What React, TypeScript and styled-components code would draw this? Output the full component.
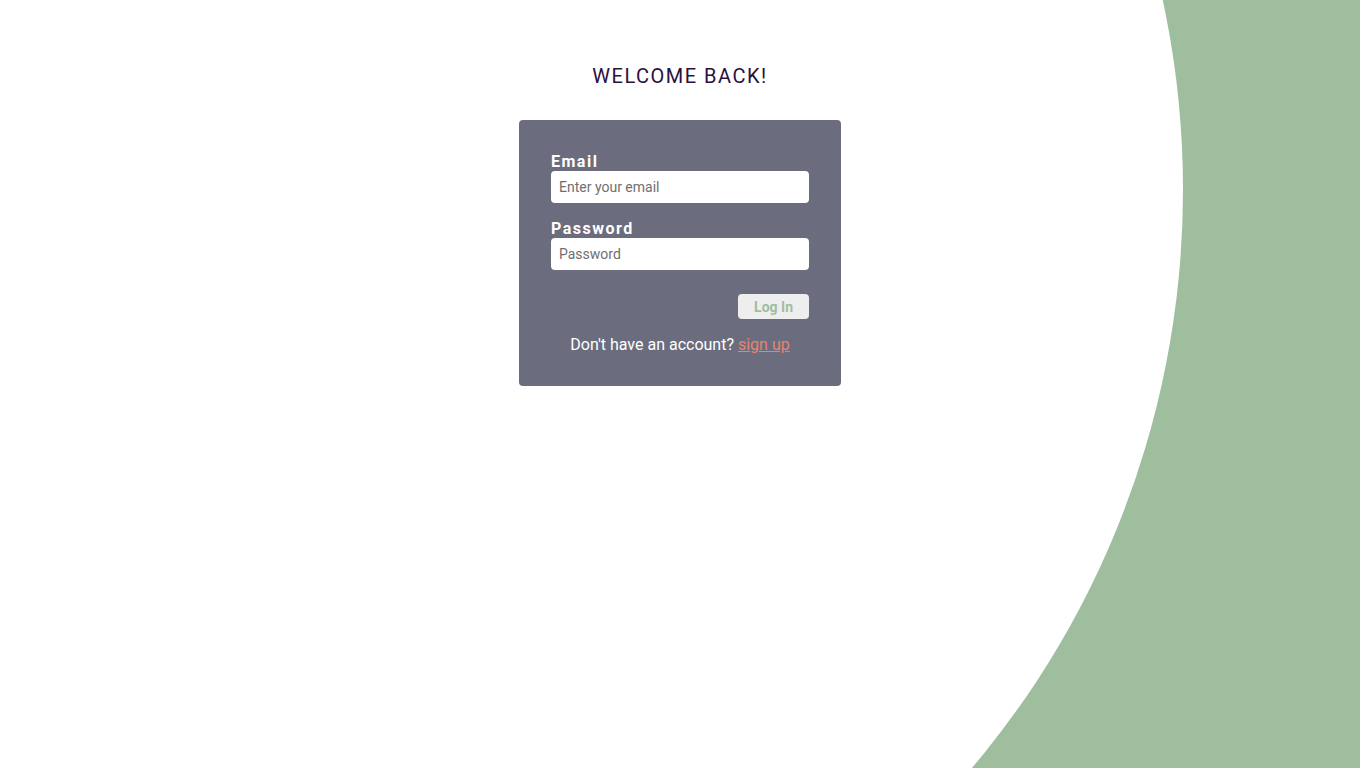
import React from "react";
import styled, { createGlobalStyle } from "styled-components";

const GlobalStyle = createGlobalStyle`
  html, body {
    margin: 0;
    padding: 0;
    background: #ffffff;
    font-family: Roboto, "Liberation Sans", Arial, sans-serif;
  }
  #root {
    min-height: 100vh;
  }
`;

const Page = styled.main`
  position: relative;
  min-height: 768px;
  overflow: hidden;
`;

const Backdrop = styled.svg`
  position: absolute;
  inset: 0;
  width: 100%;
  height: 100%;
  z-index: 0;
`;

const Content = styled.div`
  position: relative;
  z-index: 1;
  display: flex;
  flex-direction: column;
  align-items: center;
  padding-top: 64px;
`;

const Title = styled.h1`
  margin: 0;
  font-family: Roboto, "Liberation Sans", Arial, sans-serif;
  font-size: 20px;
  font-weight: 400;
  line-height: 24px;
  letter-spacing: 1.5px;
  color: #2a1140;
`;

const Card = styled.form`
  margin-top: 32px;
  width: 322px;
  box-sizing: border-box;
  padding: 32px;
  background: #6b6d7e;
  border-radius: 4px;
  display: flex;
  flex-direction: column;
`;

const Field = styled.div<{ $gapTop?: number }>`
  display: flex;
  flex-direction: column;
  margin-top: ${(p) => p.$gapTop ?? 0}px;
`;

const Label = styled.label`
  font-size: 16px;
  font-weight: 700;
  letter-spacing: 1.5px;
  line-height: 19px;
  color: #ffffff;
`;

const Input = styled.input`
  height: 32px;
  box-sizing: border-box;
  border: none;
  border-radius: 4px;
  padding: 0 8px;
  font-family: Roboto, "Liberation Sans", Arial, sans-serif;
  font-size: 14px;
  color: #333;
  background: #ffffff;
  outline: none;
  &::placeholder {
    color: #6f6f6f;
  }
`;

const Actions = styled.div`
  display: flex;
  justify-content: flex-end;
  margin-top: 24px;
`;

const Button = styled.button`
  height: 25px;
  padding: 0 16px;
  border: none;
  border-radius: 4px;
  background: #eeeeee;
  color: #9ebe9e;
  font-family: Roboto, "Liberation Sans", Arial, sans-serif;
  font-size: 14px;
  font-weight: 700;
  cursor: pointer;
`;

const Footer = styled.p`
  margin: 16px 0 0;
  text-align: center;
  font-size: 16px;
  line-height: 19px;
  color: #ffffff;
`;

const SignUp = styled.a`
  color: #e8836c;
  text-decoration: underline;
`;

export default function App() {
  return (
    <>
      <GlobalStyle />
      <Page>
        <Backdrop viewBox="0 0 1360 768" preserveAspectRatio="none" aria-hidden>
          <rect x="0" y="0" width="1360" height="768" fill="#9ebe9e" />
          <ellipse cx="313" cy="190" rx="870" ry="885" fill="#ffffff" />
        </Backdrop>
        <Content>
          <Title>WELCOME BACK!</Title>
          <Card onSubmit={(e) => e.preventDefault()}>
            <Field>
              <Label htmlFor="email">Email</Label>
              <Input id="email" type="email" placeholder="Enter your email" />
            </Field>
            <Field $gapTop={16}>
              <Label htmlFor="password">Password</Label>
              <Input id="password" type="password" placeholder="Password" />
            </Field>
            <Actions>
              <Button type="submit">Log In</Button>
            </Actions>
            <Footer>
              Don't have an account? <SignUp href="#">sign up</SignUp>
            </Footer>
          </Card>
        </Content>
      </Page>
    </>
  );
}
